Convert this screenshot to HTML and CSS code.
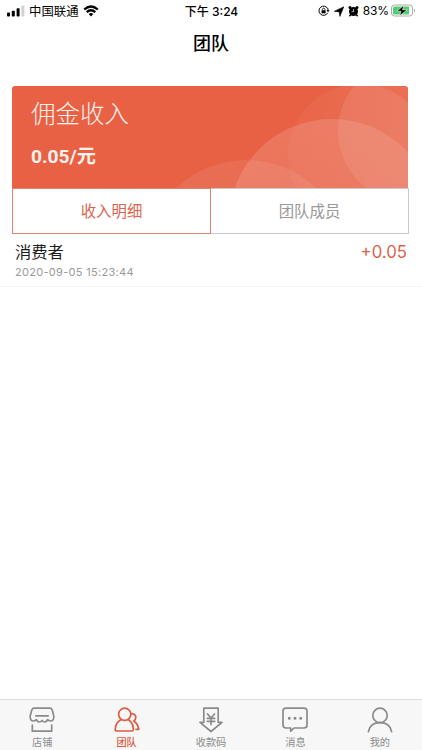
FILE: index.html
```html
<!DOCTYPE html>
<html lang="zh-CN">
<head>
<meta charset="utf-8">
<title>团队</title>
<link rel="stylesheet" href="styles.css">
</head>
<body>
<div class="app">
  <header class="status">
    <div class="status-left">
      <svg width="18" height="12" viewBox="0 0 18 12"><rect x="0" y="7.5" width="3" height="4" rx=".8"/><rect x="4.8" y="5.7" width="3" height="5.8" rx=".8"/><rect x="9.6" y="3.2" width="3" height="8.3" rx=".8"/><rect x="14.4" y=".5" width="3" height="11" rx=".8" fill="#d2d2d2"/></svg>
      <span class="carrier">中国联通</span>
      <svg width="16" height="12" viewBox="0 0 16 12" fill="none" stroke="#000" stroke-width="2.3"><path d="M1.2 4.5Q8-1.5 14.8 4.5M3.7 7.2Q8 3.4 12.3 7.2"/><path d="M5.7 8.9Q8 7.2 10.3 8.9L8 11.4Z" fill="#000" stroke="none"/></svg>
    </div>
    <div class="clock">下午 3:24</div>
    <div class="status-right">
      <svg width="12" height="12" viewBox="0 0 12 12" fill="none" stroke="#000"><path d="M9.7 7.8A4.6 4.6 0 1 1 9.7 3.7M10 3.5V6"/><path d="M8.5 5.2H11.6L10 7.2Z" fill="#000" stroke="none"/><path d="M4.3 5.6V4.5a1.3 1.3 0 0 1 2.6 0v1.1" stroke-width=".8"/><rect x="3.6" y="5.3" width="4" height="3" fill="#000" stroke="none"/></svg>
      <svg width="10" height="11" viewBox="0 0 10 11"><path d="M9.8.8 5.9 10.4 5.2 5.9.3 5.3Z" stroke="#000" stroke-width=".6"/></svg>
      <svg width="11" height="12" viewBox="0 0 11 12"><circle cx="5.5" cy="6.5" r="4.5"/><circle cx="2" cy="2.6" r="1.5"/><circle cx="9" cy="2.6" r="1.5"/><path d="M2.8 9.5 1.4 11.2M8.2 9.5 9.6 11.2" stroke="#000" stroke-width="1.4"/><path d="M5.6 4V6.7H3.6" fill="none" stroke="#fff" stroke-width=".7"/></svg>
      <span class="percent">83%</span>
      <svg class="battery" width="25" height="13" viewBox="0 0 25 13"><rect x=".5" y="1" width="21" height="11" rx="3" fill="#fff" stroke="#aaa"/><path d="M3.5 2.5H18V10.5H3.5Q2 10.5 2 9V4Q2 2.5 3.5 2.5" fill="#50cf70"/><path d="M23 4.8Q25 6.5 23 8.2Z" fill="#999"/><path d="M12.8 1.3 5.8 7.2H10L8.6 11.8 16.3 5.8H11.6Z" stroke="#fff" stroke-width=".6"/></svg>
    </div>
  </header>
  <h1 class="title">团队</h1>
  <main>
    <section class="card">
      <svg class="bubbles" width="396" height="102" viewBox="12 86 396 102">
        <defs>
          <linearGradient id="fade" x1="0" y1="0" x2="1" y2="0"><stop offset="0" stop-color="#fff" stop-opacity=".03"/><stop offset="1" stop-color="#fff" stop-opacity=".1"/></linearGradient>
          <linearGradient id="glow" x1="0" y1="0" x2=".6" y2="1"><stop offset="0" stop-color="#fff" stop-opacity=".15"/><stop offset="1" stop-color="#fff" stop-opacity=".07"/></linearGradient>
        </defs>
        <circle cx="360" cy="156" r="72" fill="url(#fade)"/>
        <circle cx="332" cy="222" r="103" fill="url(#glow)"/>
        <circle cx="246" cy="261" r="101" fill="#fff" fill-opacity=".08"/>
        <circle cx="409" cy="131" r="71" fill="#fff" fill-opacity=".09"/>
      </svg>
      <div class="card-label">佣金收入</div>
      <div class="card-value">0.05/元</div>
    </section>
    <nav class="tabs">
      <div class="tab tab-active">收入明细</div>
      <div class="tab">团队成员</div>
    </nav>
    <article class="record">
      <div>
        <div class="record-name">消费者</div>
        <div class="record-time">2020-09-05 15:23:44</div>
      </div>
      <div class="record-amount">+0.05</div>
    </article>
  </main>
  <footer class="tabbar">
    <div class="item">
      <svg width="28" height="26" viewBox="0 0 28 26"><path d="M6.2 1.2H21.8Q23.6 1.2 24.2 3L25.8 9Q26.2 13.8 22.4 14Q20.6 14 19.6 12.6Q18.8 15 16.8 15Q15 15 14 13.4Q13 15 11.2 15Q9.2 15 8.4 12.6Q7.4 14 5.6 14Q1.8 13.8 2.2 9L3.8 3Q4.4 1.2 6.2 1.2ZM7.8 8.8H20.2M4.3 18V24.2H23.7V18"/></svg>
      <span>店铺</span>
    </div>
    <div class="item item-active">
      <svg width="28" height="26" viewBox="0 0 28 26"><circle cx="11.7" cy="7.3" r="6.1"/><path d="M7.8 12.7Q2.8 15.3 2.2 22.2Q2.2 24 3.8 24H18.4Q20.6 24 20.4 21.8Q19.6 15.3 15.6 12.7M18.8 6.7Q22.6 7 22.8 10.2Q22.8 12.6 20.8 14.2Q25 16.8 25.8 22.3H23"/></svg>
      <span>团队</span>
    </div>
    <div class="item">
      <svg width="28" height="26" viewBox="0 0 28 26"><path d="M6.8 1.2H21.2V15.3H25L14 24.5 3 15.3H6.8Z"/><path d="M10.5 7 14 11 17.5 7M14 11V17.5M10.3 11.4H17.7M10.3 14.3H17.7"/></svg>
      <span>收款码</span>
    </div>
    <div class="item">
      <svg width="28" height="26" viewBox="0 0 28 26"><path d="M5 1.2H23Q26 1.2 26 4.2V18Q26 21 23 21H13L9.7 24.1V21H5Q2 21 2 18V4.2Q2 1.2 5 1.2Z"/><path d="M8.3 11.3h.01M14 11.3h.01M19.7 11.3h.01" stroke-width="3"/></svg>
      <span>消息</span>
    </div>
    <div class="item">
      <svg width="28" height="26" viewBox="0 0 28 26"><circle cx="14" cy="8.4" r="7.2"/><path d="M2.4 24.6Q4 15.6 14 15.6Q24 15.6 25.6 24.6"/></svg>
      <span>我的</span>
    </div>
  </footer>
</div>
</body>
</html>
```
FILE: styles.css
```css
* { box-sizing: border-box; }
body {
  margin: 0;
  background: #fff;
  color: #1c1c1c;
  font-family: Inter, "Noto Sans CJK SC", sans-serif;
}
svg { display: block; flex: none; }
.app { width: 422px; height: 750px; display: flex; flex-direction: column; overflow: hidden; }
.status {
  height: 22px;
  display: grid;
  grid-template-columns: 1fr auto 1fr;
  align-items: center;
  padding: 0 6px 0 7px;
  font-size: 12.4px;
  line-height: 22px;
  color: #000;
}
.status-left, .status-right { display: flex; align-items: center; }
.status-left svg { margin-top: -1px; }
.carrier { margin: 1px 4px 0; }
.clock { font-weight: 500; font-size: 12px; }
.status-right { justify-content: flex-end; gap: 4px; }
.status-right svg { margin-top: -1px; }
.status-right .battery { margin-left: -2px; margin-top: -2px; }
.percent { font-size: 12px; letter-spacing: -.1px; margin-top: -1px; }
.title {
  margin: 0;
  height: 64px;
  padding-top: 9px;
  font-size: 18px;
  line-height: 26px;
  font-weight: 500;
  text-align: center;
  color: #000;
}
main { flex: 1; }
.card {
  position: relative;
  height: 102px;
  margin: 0 14px 0 12px;
  padding: 10px 19px;
  overflow: hidden;
  border-radius: 3px 3px 0 0;
  background: #e86144;
  color: #fff1ec;
}
.bubbles { position: absolute; inset: 0; }
.card-label, .card-value { position: relative; }
.card-label { font-size: 24.5px; line-height: 36px; font-weight: 300; }
.card-value { margin-top: 11px; font-family: Roboto, "Noto Sans CJK SC", sans-serif; font-size: 19.2px; line-height: 28px; font-weight: 700; }
.tabs { display: flex; height: 46px; margin: 0 13px 0 12px; }
.tab {
  flex: 1;
  border: 1px solid #c8c8c8;
  border-left: 0;
  text-align: center;
  font-size: 15.4px;
  line-height: 46px;
  color: #999;
}
.tab-active { border: 1px solid #dc8471; color: #dc644e; }
.record {
  display: flex;
  justify-content: space-between;
  height: 53px;
  padding: 5px 15px 0;
  border-bottom: 1px solid #f5f5f5;
}
.record-name { font-size: 16.3px; line-height: 26px; }
.record-time { margin-top: -2px; font-size: 11px; line-height: 18px; letter-spacing: .3px; color: #999; }
.record-amount { font-size: 16.8px; line-height: 27px; color: #df6049; }
.tabbar {
  height: 51px;
  display: flex;
  border-top: 1px solid #dfdfdf;
  background: #f7f7f7;
}
.item {
  flex: 1;
  display: flex;
  flex-direction: column;
  align-items: center;
  padding-top: 7px;
  font-size: 10.2px;
  line-height: 16px;
  color: #8b8b8b;
}
.item span { margin-top: 1px; }
.item svg { fill: none; stroke: currentColor; stroke-width: 1.7; stroke-linejoin: round; stroke-linecap: round; }
.item-active { color: #dd5b42; }
.item-active span { font-weight: 500; }
```
